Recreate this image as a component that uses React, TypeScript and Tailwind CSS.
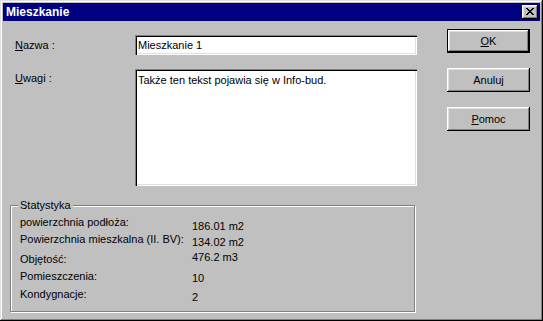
import React from "react";

const raised =
	"shadow-[inset_-1px_-1px_#000,inset_1px_1px_#fff,inset_-2px_-2px_#808080,inset_2px_2px_#dfdfdf]";
const sunken =
	"shadow-[inset_1px_1px_#808080,inset_2px_2px_#000,inset_-1px_-1px_#fff,inset_-2px_-2px_#dfdfdf]";

const Btn = ({
	children,
	isDefault,
}: {
	children: React.ReactNode;
	isDefault?: boolean;
}) => (
	<div
		className={`w-[83px] h-[24px] bg-[#c0c0c0] ${
			isDefault ? "border border-black" : ""
		}`}
	>
		<div
			className={`w-full h-full flex items-center justify-center text-black ${raised}`}
		>
			{children}
		</div>
	</div>
);

const App = () => {
	const labels = [
		{ text: "powierzchnia podłoża:", mt: "mt-[10px]" },
		{ text: "Powierzchnia mieszkalna (II. BV):", mt: "mt-[4px]" },
		{ text: "Objętość:", mt: "mt-[7px]" },
		{ text: "Pomieszczenia:", mt: "mt-[4px]" },
		{ text: "Kondygnacje:", mt: "mt-[5px]" },
	];
	const values = [
		{ text: "186.01 m2", mt: "mt-[14px]" },
		{ text: "134.02 m2", mt: "mt-[3px]" },
		{ text: "476.2 m3", mt: "mt-[2px]" },
		{ text: "10", mt: "mt-[8px]" },
		{ text: "2", mt: "mt-[6px]" },
	];

	return (
		<div
			className="w-[543px] h-[321px] bg-[#c0c0c0] text-[11px] leading-[13px] text-black shadow-[inset_-1px_-1px_#000,inset_1px_1px_#dfdfdf,inset_-2px_-2px_#808080,inset_2px_2px_#fff] p-[3px] flex flex-col"
			style={{ fontFamily: '"Liberation Sans", Arial, sans-serif' }}
		>
			{/* title bar */}
			<div className="h-[18px] bg-[#000080] flex items-center justify-between pl-[3px] pr-[2px]">
				<span className="text-white font-bold text-[12px]">Mieszkanie</span>
				<div
					className={`w-[16px] h-[14px] bg-[#c0c0c0] flex items-center justify-center ${raised}`}
				>
					<svg width="8" height="7" viewBox="0 0 8 7" className="-mt-[1px] -ml-[1px]">
						<path
							d="M0 0h2v1h1v1h2v-1h1v-1h2v1h-1v1h-1v1h-1v1h1v1h1v1h1v1h-2v-1h-1v-1h-2v1h-1v1h-2v-1h1v-1h1v-1h1v-1h-1v-1h-1v-1h-1z"
							fill="#000"
						/>
					</svg>
				</div>
			</div>

			{/* body */}
			<div className="flex flex-1 pl-[7px]">
				<div className="w-[407px] flex flex-col">
					<div className="mt-[14px] flex items-center pl-[5px]">
						<span className="w-[120px]">
							<u>N</u>azwa :
						</span>
						<div className={`w-[282px] h-[20px] bg-white flex items-center pl-[3px] ${sunken}`}>
							Mieszkanie 1
						</div>
					</div>
					<div className="mt-[14px] flex pl-[5px]">
						<span className="w-[120px] pt-[3px]">
							<u>U</u>wagi :
						</span>
						<div className={`w-[282px] h-[117px] bg-white pl-[3px] pt-[5px] ${sunken}`}>
							Także ten tekst pojawia się w Info-bud.
						</div>
					</div>
					<div className="mt-[19px] w-[405px] h-[107px] relative border border-[#808080] shadow-[1px_1px_0_#fff,inset_1px_1px_0_#fff]">
						<span className="absolute -top-[7px] left-[7px] px-[2px] bg-[#c0c0c0]">
							Statystyka
						</span>
						<div className="flex pl-[9px]">
							<div className="w-[172px] flex flex-col">
								{labels.map((l) => (
									<span key={l.text} className={l.mt}>
										{l.text}
									</span>
								))}
							</div>
							<div className="flex flex-col">
								{values.map((v) => (
									<span key={v.text} className={v.mt}>
										{v.text}
									</span>
								))}
							</div>
						</div>
					</div>
				</div>

				<div className="ml-[30px] mt-[8px] flex flex-col gap-[15px]">
					<Btn isDefault>
						<span>
							<u>O</u>K
						</span>
					</Btn>
					<Btn>Anuluj</Btn>
					<Btn>
						<span>
							<u>P</u>omoc
						</span>
					</Btn>
				</div>
			</div>
		</div>
	);
};

export default App;
